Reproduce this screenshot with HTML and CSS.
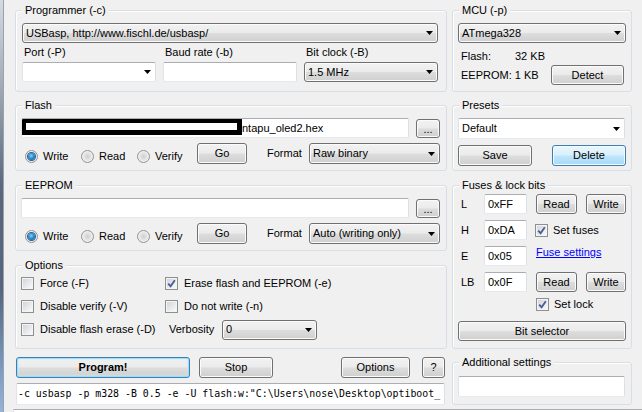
FILE: index.html
```html
<!DOCTYPE html>
<html lang="en">
<head>
<meta charset="utf-8">
<title>AVRDUDESS</title>
<link rel="stylesheet" href="styles.css">
</head>
<body>
<div class="frame"></div>
<div class="app">
  <div class="cols">
    <div class="col left">
      <section class="group g-prog">
        <span class="legend">Programmer (-c)</span>
        <div class="combo">USBasp, http://www.fischl.de/usbasp/<svg class="arr" viewBox="0 0 7 4"><path d="M0 0h7L3.5 4z"/></svg></div>
        <div class="prog-row">
          <div class="field"><div class="lbl">Port (-P)</div><div class="combo white"><span></span><svg class="arr" viewBox="0 0 7 4"><path d="M0 0h7L3.5 4z"/></svg></div></div>
          <div class="field"><div class="lbl">Baud rate (-b)</div><div class="tb"></div></div>
          <div class="field"><div class="lbl">Bit clock (-B)</div><div class="combo">1.5 MHz<svg class="arr" viewBox="0 0 7 4"><path d="M0 0h7L3.5 4z"/></svg></div></div>
        </div>
      </section>

      <section class="group g-file">
        <span class="legend">Flash</span>
        <div class="file-row">
          <div class="tb file"><span class="redact"></span><span class="fname">ntapu_oled2.hex</span></div>
          <div class="btn dots">...</div>
        </div>
        <div class="op-row">
          <div class="radios">
            <span class="ri r1"><span class="radio on"></span>Write</span>
            <span class="ri r2"><span class="radio"></span>Read</span>
            <span class="ri r3"><span class="radio"></span>Verify</span>
          </div>
          <div class="btn go">Go</div>
          <span class="fmt">Format</span>
          <div class="combo fcombo">Raw binary<svg class="arr" viewBox="0 0 7 4"><path d="M0 0h7L3.5 4z"/></svg></div>
        </div>
      </section>

      <section class="group g-file g-eep">
        <span class="legend">EEPROM</span>
        <div class="file-row">
          <div class="tb file"></div>
          <div class="btn dots">...</div>
        </div>
        <div class="op-row">
          <div class="radios">
            <span class="ri r1"><span class="radio on"></span>Write</span>
            <span class="ri r2"><span class="radio"></span>Read</span>
            <span class="ri r3"><span class="radio"></span>Verify</span>
          </div>
          <div class="btn go">Go</div>
          <span class="fmt">Format</span>
          <div class="combo fcombo">Auto (writing only)<svg class="arr" viewBox="0 0 7 4"><path d="M0 0h7L3.5 4z"/></svg></div>
        </div>
      </section>

      <section class="group g-opt">
        <span class="legend">Options</span>
        <div class="opt-grid">
          <label class="ck"><span class="cb"></span>Force (-F)</label>
          <label class="ck"><span class="cb on"><svg viewBox="0 0 11 11"><path d="M2.2 5.6 4.6 8.2 8.8 2.2"/></svg></span>Erase flash and EEPROM (-e)</label>
          <label class="ck"><span class="cb"></span>Disable verify (-V)</label>
          <label class="ck"><span class="cb"></span>Do not write (-n)</label>
          <label class="ck"><span class="cb"></span>Disable flash erase (-D)</label>
          <div class="verb"><span class="vlbl">Verbosity</span><div class="combo vcombo">0<svg class="arr" viewBox="0 0 7 4"><path d="M0 0h7L3.5 4z"/></svg></div></div>
        </div>
      </section>

      <div class="actions">
        <div class="btn prog">Program!</div>
        <div class="btn stop">Stop</div>
        <div class="btn opts">Options</div>
        <div class="btn help">?</div>
      </div>
      <div class="tb cmd">-c usbasp -p m328 -B 0.5 -e -U flash:w:"C:\Users\nose\Desktop\optiboot_</div>
    </div>

    <div class="col right">
      <section class="group g-mcu">
        <span class="legend">MCU (-p)</span>
        <div class="combo">ATmega328<svg class="arr" viewBox="0 0 7 4"><path d="M0 0h7L3.5 4z"/></svg></div>
        <div class="mcu-info">
          <div class="mrow1"><span class="mk">Flash:</span><span>32 KB</span></div>
          <div class="mrow2"><span>EEPROM: 1 KB</span><div class="btn detect">Detect</div></div>
        </div>
      </section>

      <section class="group g-pre">
        <span class="legend">Presets</span>
        <div class="combo white pcombo">Default<svg class="arr" viewBox="0 0 7 4"><path d="M0 0h7L3.5 4z"/></svg></div>
        <div class="pre-btns">
          <div class="btn pb">Save</div>
          <div class="btn pb hot">Delete</div>
        </div>
      </section>

      <section class="group g-fuse">
        <span class="legend">Fuses &amp; lock bits</span>
        <div class="frow"><span class="fl">L</span><div class="tb ftb">0xFF</div><div class="btn fread">Read</div><div class="btn fwrite">Write</div></div>
        <div class="frow"><span class="fl">H</span><div class="tb ftb">0xDA</div><label class="ck fck"><span class="cb on"><svg viewBox="0 0 11 11"><path d="M2.2 5.6 4.6 8.2 8.8 2.2"/></svg></span>Set fuses</label></div>
        <div class="frow"><span class="fl">E</span><div class="tb ftb">0x05</div><a class="link">Fuse settings</a></div>
        <div class="frow"><span class="fl">LB</span><div class="tb ftb">0x0F</div><div class="btn fread">Read</div><div class="btn fwrite">Write</div></div>
        <label class="ck lock"><span class="cb on"><svg viewBox="0 0 11 11"><path d="M2.2 5.6 4.6 8.2 8.8 2.2"/></svg></span>Set lock</label>
        <div class="btn bitsel">Bit selector</div>
      </section>

      <section class="group g-add">
        <span class="legend">Additional settings</span>
        <div class="tb addtb"></div>
      </section>
    </div>
  </div>
  <div class="log"></div>
</div>
</body>
</html>
```

FILE: styles.css
```css
* { box-sizing: border-box; margin: 0; padding: 0; }
html, body { height: 100%; }
body {
  background: #f0f0f0;
  font: 11px/13px "Liberation Sans", Arial, sans-serif;
  color: #000;
  display: flex;
  overflow: hidden;
}
.frame {
  width: 4px;
  flex: none;
  background: linear-gradient(#d4dae1, #a3adb9 20%, #5a697c 45%, #55667c 70%, #7c9cc4 90%, #94b4da);
  border-right: 1px solid #9aa3ad;
}
.app { margin-left: 11px; display: flex; flex-direction: column; }
.cols { display: flex; gap: 5px; padding-top: 10px; }
.col { display: flex; flex-direction: column; }
.left { width: 432px; }
.right { width: 180px; }

/* group boxes */
.group {
  position: relative;
  border: 1px solid #d5dfe5;
  border-radius: 3px;
  box-shadow: inset 1px 1px 0 #fff;
}
.legend {
  position: absolute;
  top: -7px;
  left: 6px;
  padding: 0 3px;
  background: #f0f0f0;
  line-height: 13px;
  white-space: nowrap;
}

/* controls */
.btn {
  display: flex;
  align-items: center;
  justify-content: center;
  height: 21px;
  border: 1px solid #707070;
  border-radius: 3px;
  background: linear-gradient(#f2f2f2 0%, #ebebeb 48%, #dddddd 52%, #cfcfcf 100%);
  box-shadow: inset 0 0 0 1px #fbfbfb;
  white-space: nowrap;
}
.btn.hot {
  border-color: #3c7fb1;
  background: linear-gradient(#eaf6fd 0%, #d9f0fc 48%, #bee6fd 52%, #a7d9f5 100%);
  box-shadow: inset 0 0 0 1px #f4fbff;
}
.combo {
  display: flex;
  align-items: center;
  justify-content: space-between;
  height: 20px;
  padding: 0 4px 0 3px;
  border: 1px solid #707070;
  border-radius: 3px;
  background: linear-gradient(#f2f2f2 0%, #ebebeb 48%, #dddddd 52%, #cfcfcf 100%);
  box-shadow: inset 0 0 0 1px #fbfbfb;
  white-space: nowrap;
}
.combo.white {
  background: #fff;
  box-shadow: none;
  border-radius: 2px;
  border-color: #abadb3 #dbdfe6 #e3e9ef #e2e3ea;
}
.arr { width: 7px; height: 4px; flex: none; fill: #000; }
.tb {
  height: 20px;
  background: #fff;
  border: 1px solid;
  border-color: #abadb3 #dbdfe6 #e3e9ef #e2e3ea;
  border-radius: 2px;
  white-space: nowrap;
  overflow: hidden;
}

.radio {
  width: 13px;
  height: 13px;
  flex: none;
  border-radius: 50%;
  border: 1px solid #929292;
  background: radial-gradient(circle at 50% 50%, #d0d0d0 0%, #e4e4e4 45%, #f7f7f7 80%);
  display: grid;
  place-items: center;
}
.radio.on::after {
  content: "";
  width: 7px;
  height: 7px;
  border-radius: 50%;
  background: radial-gradient(circle at 45% 40%, #8ed0fa 0%, #2d8fd5 45%, #0f4d86 100%);
  box-shadow: 0 0 0 1px #24608f;
}
.cb {
  width: 13px;
  height: 13px;
  flex: none;
  border: 1px solid #8e8f8f;
  background: linear-gradient(135deg, #cfd2d6 0%, #eef0f2 70%, #fbfbfb 100%);
  box-shadow: inset 0 0 0 1px #f4f4f4;
  display: grid;
  place-items: center;
}
.cb svg { width: 11px; height: 11px; fill: none; stroke: #4a5f97; stroke-width: 1.9; }
.ck { display: flex; align-items: center; gap: 6px; white-space: nowrap; }

/* programmer */
.g-prog { height: 82px; padding: 12px 8px 0 6px; }
.prog-row { display: grid; grid-template-columns: repeat(3, 134px); column-gap: 7px; margin-top: 3px; }
.lbl { padding-left: 2px; margin-bottom: 3px; }

/* flash / eeprom */
.g-file { height: 66px; padding: 12px 6px 0 5px; margin-top: 13px; }
.g-eep { margin-top: 14px; }
.file-row { display: flex; gap: 7px; }
.file-row .tb { flex: 1; }
.tb.file { display: flex; align-items: center; }
.redact {
  align-self: flex-start;
  width: 221px;
  height: 17px;
  flex: none;
  margin: -1px 0 0 -1px;
  border: 5px solid #000;
  background: #fff;
}
.dots { width: 24px; height: 19px; margin-top: 1px; align-items: flex-end; padding-bottom: 3px; line-height: 9px; }
.op-row { display: flex; align-items: center; margin-top: 5px; height: 21px; }
.radios { display: flex; margin-left: 4px; margin-top: 5px; }
.ri { display: flex; align-items: center; gap: 5px; }
.r1, .r2 { width: 56px; }
.r3 { width: 60px; }
.go { width: 50px; }
.fmt { margin-left: 20px; }
.fcombo { width: 131px; height: 21px; margin-left: auto; }

/* options */
.g-opt { height: 84px; padding: 6px 5px 0 5px; margin-top: 14px; }
.opt-grid { display: grid; grid-template-columns: 144px 1fr; grid-auto-rows: 23px; align-items: center; }
.verb { display: flex; align-items: center; }
.vlbl { width: 57px; padding-left: 4px; }
.vcombo { width: 95px; }

/* bottom */
.actions { display: flex; margin-top: 8px; height: 21px; }
.prog {
  width: 174px;
  margin-left: 1px;
  font-weight: bold;
  border-color: #3c7fb1;
  box-shadow: inset 0 0 0 1px #9fdcf7, inset 0 0 3px 1px #c8ecfb;
}
.stop { width: 74px; margin-left: 9px; }
.opts { width: 69px; margin-left: 68px; }
.help { width: 23px; margin-left: 12px; }
.cmd {
  margin: 5px 0 0 1px;
  width: 429px;
  height: 22px;
  padding-left: 1px;
  font: 9.9px/20px "DejaVu Sans Mono", "Liberation Mono", monospace;
}

/* mcu */
.g-mcu { height: 82px; padding: 12px 5px 0 5px; }
.mcu-info { padding-left: 3px; margin-top: 7px; }
.mrow1 { display: flex; height: 13px; }
.mk { width: 54px; }
.mrow2 { display: flex; align-items: center; height: 20px; margin-top: 2px; }
.detect { width: 73px; height: 20px; margin-left: auto; margin-right: 2px; }

/* presets */
.g-pre { height: 66px; padding: 12px 5px 0 5px; margin-top: 13px; }
.pcombo { height: 21px; width: 167px; }
.pre-btns { display: flex; justify-content: space-between; margin-top: 6px; }
.pb { width: 74px; }

/* fuses */
.g-fuse { height: 164px; padding: 8px 5px 0 5px; margin-top: 14px; }
.frow { display: flex; align-items: center; height: 20px; margin-bottom: 6px; }
.fl { width: 26px; padding-left: 3px; }
.ftb { width: 43px; padding-left: 3px; line-height: 18px; }
.fread { width: 41px; height: 20px; margin-left: 9px; }
.fwrite { width: 40px; height: 20px; margin-left: 9px; }
.fck { margin-left: 8px; gap: 5px; }
.link { color: #0000ff; text-decoration: underline; margin-left: 9px; align-self: flex-start; }
.lock { margin-top: 5px; height: 13px; padding-left: 78px; gap: 5px; }
.bitsel { height: 20px; margin-top: 10px; }

/* additional */
.g-add { height: 43px; padding: 13px 5px 0 5px; margin-top: 13px; }
.addtb { height: 21px; width: 167px; }

.log {
  margin: 4px 0 0 -2px;
  width: 630px;
  height: 10px;
  border-top: 1px solid #abadb3;
  border-left: 1px solid #e2e3ea;
  background: #fff;
}
```
